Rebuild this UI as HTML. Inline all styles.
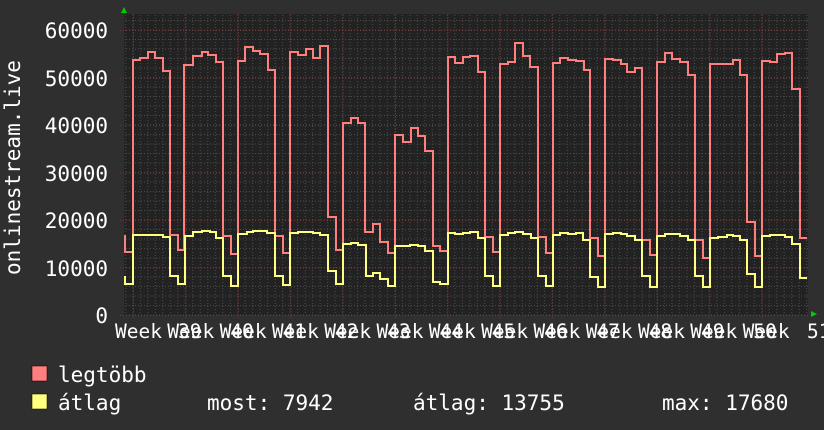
<!DOCTYPE html>
<html><head><meta charset="utf-8"><style>
html,body{margin:0;padding:0;background:#2f2f2f;}
svg{display:block;}
text{font-family:"DejaVu Sans Mono","Liberation Mono",monospace;fill:#fff;}
</style></head><body>
<svg width="824" height="430" viewBox="0 0 824 430" xmlns="http://www.w3.org/2000/svg">
<defs>
<pattern id="ph" patternUnits="userSpaceOnUse" x="0" y="0" width="3" height="9.5">
<rect x="0" y="1" width="1" height="1" fill="#4c4c4c"/>
</pattern>
<pattern id="pv" patternUnits="userSpaceOnUse" x="0" y="0" width="7.486" height="3">
<rect x="5.2" y="0" width="1" height="1" fill="#4c4c4c"/>
</pattern>
</defs>
<rect width="824" height="430" fill="#2f2f2f"/>
<rect x="124" y="14" width="684" height="301" fill="#222"/>
<rect x="124" y="14" width="684" height="301" fill="url(#ph)"/>
<rect x="124" y="14" width="684" height="301" fill="url(#pv)"/>
<g stroke="#7a3535" stroke-width="1" stroke-dasharray="1,2">
<line x1="120" x2="808" y1="315.5" y2="315.5"/>
<line x1="120" x2="808" y1="268" y2="268"/>
<line x1="120" x2="808" y1="220.5" y2="220.5"/>
<line x1="120" x2="808" y1="173" y2="173"/>
<line x1="120" x2="808" y1="125.5" y2="125.5"/>
<line x1="120" x2="808" y1="78" y2="78"/>
<line x1="120" x2="808" y1="30.5" y2="30.5"/>
<line y1="14" y2="319" x1="133.5" x2="133.5"/>
<line y1="14" y2="319" x1="185.9" x2="185.9"/>
<line y1="14" y2="319" x1="238.3" x2="238.3"/>
<line y1="14" y2="319" x1="290.7" x2="290.7"/>
<line y1="14" y2="319" x1="343.1" x2="343.1"/>
<line y1="14" y2="319" x1="395.5" x2="395.5"/>
<line y1="14" y2="319" x1="447.9" x2="447.9"/>
<line y1="14" y2="319" x1="500.3" x2="500.3"/>
<line y1="14" y2="319" x1="552.7" x2="552.7"/>
<line y1="14" y2="319" x1="605.1" x2="605.1"/>
<line y1="14" y2="319" x1="657.5" x2="657.5"/>
<line y1="14" y2="319" x1="709.9" x2="709.9"/>
<line y1="14" y2="319" x1="762.3" x2="762.3"/>
</g>
<path fill="none" stroke="#ff7f7f" stroke-width="2" d="M125 235 V252 H133 V60 H140 V58 H148 V52 H155 V58 H163 V71 H170 V235 H178 V250 H184 V65 H193 V56 H202 V52 H208 V55 H216 V62 H223 V236 H231 V254 H238 V61 H245 V47 H253 V51 H260 V54 H268 V70 H275 V236 H283 V253 H290 V52 H298 V55 H306 V49 H313 V58 H320 V46 H328 V217 H336 V250 H343 V123 H351 V118 H358 V123 H365 V232 H373 V224 H380 V242 H388 V253 H395 V135 H403 V142 H411 V128 H418 V136 H425 V151 H433 V246 H440 V251 H448 V57 H455 V63 H463 V57 H470 V56 H478 V72 H485 V237 H493 V252 H500 V64 H508 V62 H515 V43 H523 V56 H530 V67 H538 V237 H546 V253 H553 V63 H560 V58 H568 V60 H576 V61 H584 V70 H590 V238 H598 V256 H605 V59 H613 V60 H621 V64 H627 V72 H635 V68 H642 V240 H650 V255 H657 V62 H665 V53 H672 V59 H680 V62 H688 V75 H695 V240 H703 V258 H710 V64 H733 V60 H740 V75 H747 V222 H755 V256 H762 V61 H770 V62 H777 V54 H785 V53 H792 V89 H800 V238 H807"/>
<path fill="none" stroke="#ffff7f" stroke-width="2" d="M125 276 V284 H133 V235 H163 V237 H170 V276 H178 V284 H185 V236 H193 V232 H202 V231 H210 V232 H216 V238 H223 V276 H231 V286 H238 V234 H247 V232 H253 V231 H267 V233 H275 V276 H283 V285 H290 V233 H298 V232 H313 V233 H320 V235 H328 V271 H336 V284 H343 V244 H351 V243 H358 V245 H366 V276 H373 V273 H380 V279 H388 V286 H395 V246 H410 V245 H418 V246 H425 V251 H433 V282 H440 V284 H448 V233 H455 V234 H463 V233 H470 V232 H478 V238 H485 V276 H493 V286 H500 V235 H508 V233 H515 V232 H523 V234 H531 V238 H538 V276 H546 V286 H553 V235 H560 V233 H568 V234 H576 V233 H583 V240 H590 V277 H598 V287 H605 V234 H613 V233 H621 V234 H627 V236 H635 V240 H642 V276 H650 V287 H657 V236 H665 V234 H680 V236 H688 V240 H695 V276 H703 V287 H710 V238 H718 V237 H727 V235 H733 V236 H740 V240 H747 V274 H755 V287 H762 V236 H770 V235 H785 V237 H792 V244 H800 V278 H807"/>
<polygon points="121,13 127,13 124,7" fill="#00cc00"/>
<polygon points="811,311 811,317 817,314" fill="#00cc00"/>
<g font-size="19.5">
<text x="115" y="338">Week</text><text x="167.3" y="338">Week</text><text x="219.6" y="338">Week</text>
<text x="271.9" y="338">Week</text><text x="324.2" y="338">Week</text><text x="376.5" y="338">Week</text>
<text x="428.8" y="338">Week</text><text x="481.1" y="338">Week</text><text x="533.4" y="338">Week</text>
<text x="585.7" y="338">Week</text><text x="638" y="338">Week</text><text x="690.3" y="338">Week</text>
<text x="742.6" y="338">Week</text>
<text x="178" y="338">39</text><text x="230.3" y="338">40</text><text x="282.6" y="338">41</text>
<text x="334.9" y="338">42</text><text x="387.2" y="338">43</text><text x="439.5" y="338">44</text>
<text x="491.8" y="338">45</text><text x="544.1" y="338">46</text><text x="596.4" y="338">47</text>
<text x="648.7" y="338">48</text><text x="701" y="338">49</text><text x="753.3" y="338">50</text>
<text x="807" y="338">51</text>
</g>
<g font-size="21" text-anchor="end">
<text x="108" y="38">60000</text><text x="108" y="86">50000</text><text x="108" y="133">40000</text>
<text x="108" y="181">30000</text><text x="108" y="228">20000</text><text x="108" y="276">10000</text><text x="108" y="323">0</text>
</g>
<text font-size="21" transform="translate(20,275) rotate(-90)">onlinestream.live</text>
<rect x="32" y="366" width="15" height="15" fill="#ff7f7f" stroke="#000" stroke-width="0.5"/>
<rect x="32" y="394" width="15" height="15" fill="#ffff7f" stroke="#000" stroke-width="0.5"/>
<g font-size="21">
<text x="58" y="382">legtöbb</text>
<text x="58" y="410">átlag</text>
<text x="207" y="410">most: 7942</text>
<text x="413" y="410">átlag: 13755</text>
<text x="662" y="410">max: 17680</text>
</g>
</svg>
</body></html>
